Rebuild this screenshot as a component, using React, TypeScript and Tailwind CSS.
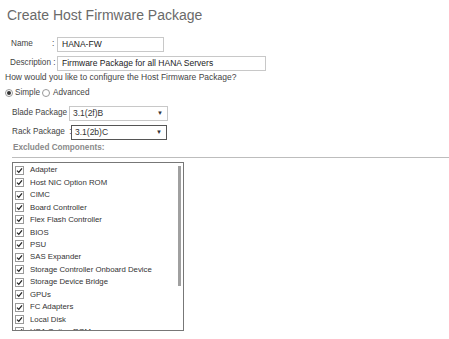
import React from 'react'

const components = [
  'Adapter',
  'Host NIC Option ROM',
  'CIMC',
  'Board Controller',
  'Flex Flash Controller',
  'BIOS',
  'PSU',
  'SAS Expander',
  'Storage Controller Onboard Device',
  'Storage Device Bridge',
  'GPUs',
  'FC Adapters',
  'Local Disk',
  'HBA Option ROM',
]

function Check() {
  return (
    <span className="flex h-[9px] w-[9px] shrink-0 items-center justify-center border border-[#9a9a9a] bg-white">
      <svg width="7" height="7" viewBox="0 0 7 7">
        <path d="M1 3.6 L2.8 5.4 L6 1.4" fill="none" stroke="#222" strokeWidth="1.3" />
      </svg>
    </span>
  )
}

function Select({ value, className }: { value: string; className: string }) {
  return (
    <div className={`flex h-[15px] shrink-0 items-center justify-between bg-white pl-[3px] pr-[4px] text-[8.5px] text-[#333] ${className}`}>
      <span>{value}</span>
      <span className="text-[6px] text-[#333]">▼</span>
    </div>
  )
}

export default function App() {
  return (
    <div
      className="h-[339px] w-[449px] overflow-hidden whitespace-nowrap bg-white text-[8.2px] text-[#444]"
      style={{ fontFamily: '"Liberation Sans", Arial, sans-serif' }}
    >
      <h1 className="pl-[7px] pt-[6px] text-[14px] leading-[18px] text-[#6a6a6a]">Create Host Firmware Package</h1>

      <div className="mt-[13px] flex h-[15px] items-center">
        <span className="w-[52px] shrink-0 pl-[11px]">Name</span>
        <span className="w-[5px] shrink-0">:</span>
        <div className="flex h-[15px] w-[107px] shrink-0 items-center border border-[#c8c8c8] pl-[4px] text-[8.5px] text-[#222]">HANA-FW</div>
      </div>

      <div className="mt-[4px] flex h-[15px] items-center">
        <span className="w-[57px] shrink-0 pl-[10px]">Description :</span>
        <div className="flex h-[15px] w-[209px] shrink-0 items-center border border-[#c8c8c8] pl-[4px] text-[8.5px] text-[#222]">
          Firmware Package for all HANA Servers
        </div>
      </div>

      <p className="mt-[1px] pl-[5px] text-[8.5px] leading-[11px]">How would you like to configure the Host Firmware Package?</p>

      <div className="mt-[5px] flex h-[10px] items-center pl-[5px]">
        <span className="flex h-[8px] w-[8px] items-center justify-center rounded-full border border-[#999]">
          <span className="h-[4px] w-[4px] rounded-full bg-[#333]" />
        </span>
        <span className="ml-[2px]">Simple</span>
        <span className="ml-[2px] h-[8px] w-[8px] rounded-full border border-[#999]" />
        <span className="ml-[3px]">Advanced</span>
      </div>

      <div className="mt-[8px] flex h-[15px] items-center">
        <span className="w-[69px] shrink-0 pl-[12px]">Blade Package :</span>
        <Select value="3.1(2f)B" className="w-[99px] border border-[#c8c8c8]" />
      </div>

      <div className="mt-[4px] flex h-[15px] items-center">
        <span className="w-[71px] shrink-0 pl-[12px]">Rack Package &nbsp;:</span>
        <Select value="3.1(2b)C" className="w-[96px] border border-[#555]" />
      </div>

      <p className="mt-[3px] pl-[13px] font-bold leading-[10px] text-[#8a8a8a]">Excluded Components:</p>

      <div className="ml-[12px] mt-[4px] h-[1px] bg-[#bdbdbd]" />

      <div className="relative ml-[12px] mt-[4px] h-[169px] w-[172px] overflow-hidden border border-[#777] pt-[1px]">
        {components.map(c => (
          <div key={c} className="flex h-[12.45px] items-center gap-[6px] pl-[2px] text-[7.8px] text-[#333]">
            <Check />
            <span>{c}</span>
          </div>
        ))}
        <div className="absolute right-[2px] top-[3px] h-[120px] w-[3px] bg-[#a0a0a0]" />
      </div>
    </div>
  )
}
